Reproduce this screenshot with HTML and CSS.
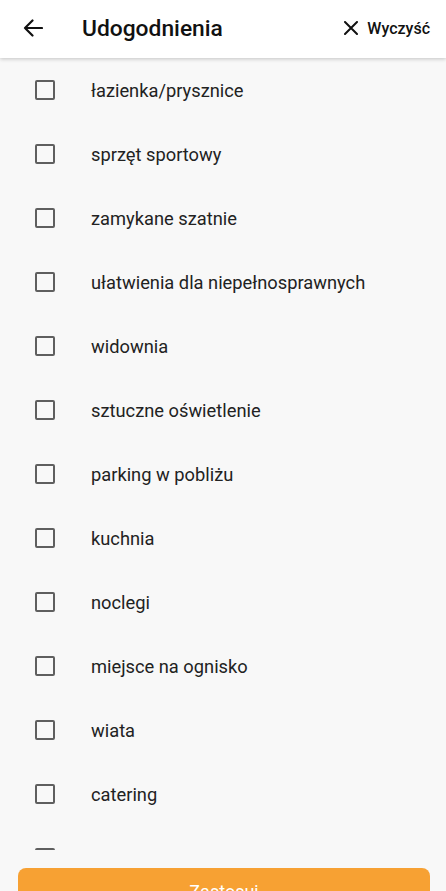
FILE: index.html
```html
<!DOCTYPE html>
<html lang="pl">
<head>
<meta charset="utf-8">
<title>Udogodnienia</title>
<link rel="stylesheet" href="styles.css">
</head>
<body>
<header class="topbar">
  <button class="back" aria-label="Wstecz">
    <svg width="20" height="18" viewBox="0 0 20 18"><path d="M19 9H2M9.5 1.5L2 9l7.5 7.5" fill="none" stroke="#111" stroke-width="2.2" stroke-linecap="round" stroke-linejoin="round"/></svg>
  </button>
  <h1 class="title">Udogodnienia</h1>
  <button class="clear">
    <svg width="14" height="14" viewBox="0 0 14 14"><path d="M1 1l12 12M13 1L1 13" stroke="#111" stroke-width="2" stroke-linecap="round"/></svg>
    <span>Wyczyść</span>
  </button>
</header>
<main class="list">
  <label class="row"><span class="box"></span><span class="text">łazienka/prysznice</span></label>
  <label class="row"><span class="box"></span><span class="text">sprzęt sportowy</span></label>
  <label class="row"><span class="box"></span><span class="text">zamykane szatnie</span></label>
  <label class="row"><span class="box"></span><span class="text">ułatwienia dla niepełnosprawnych</span></label>
  <label class="row"><span class="box"></span><span class="text">widownia</span></label>
  <label class="row"><span class="box"></span><span class="text">sztuczne oświetlenie</span></label>
  <label class="row"><span class="box"></span><span class="text">parking w pobliżu</span></label>
  <label class="row"><span class="box"></span><span class="text">kuchnia</span></label>
  <label class="row"><span class="box"></span><span class="text">noclegi</span></label>
  <label class="row"><span class="box"></span><span class="text">miejsce na ognisko</span></label>
  <label class="row"><span class="box"></span><span class="text">wiata</span></label>
  <label class="row"><span class="box"></span><span class="text">catering</span></label>
  <label class="row"><span class="box"></span></label>
</main>
<div class="footer">
  <button class="apply">Zastosuj</button>
</div>
</body>
</html>
```
FILE: styles.css
```css
* { box-sizing: border-box; }
html, body {
  margin: 0;
  padding: 0;
  height: 891px;
  overflow: hidden;
}
body {
  background: #f8f8f8;
  font-family: Roboto, "Noto Sans", sans-serif;
  color: #212121;
  position: relative;
}
.topbar {
  height: 58px;
  background: #fff;
  display: flex;
  align-items: center;
  padding: 0 16px 0 22px;
  box-shadow: 0 1px 4px rgba(0,0,0,0.22);
  position: relative;
  z-index: 2;
}
.back {
  background: none;
  border: 0;
  padding: 0;
  width: 22px;
  height: 20px;
  display: flex;
  align-items: center;
  justify-content: center;
  margin-top: -2px;
}
.title {
  margin: 0 0 0 38px;
  font-size: 22.8px;
  font-weight: 500;
  color: #111;
  flex: 1;
  margin-top: -2px;
}
.clear {
  background: none;
  border: 0;
  padding: 0;
  display: flex;
  align-items: center;
  gap: 9px;
  font-family: Roboto, sans-serif;
  font-size: 16px;
  font-weight: 500;
  color: #111;
  margin-top: -2px;
}
.list {
  display: flex;
  flex-direction: column;
}
.row {
  height: 64px;
  display: flex;
  align-items: center;
  padding-left: 35px;
}
.box {
  width: 20px;
  height: 20px;
  border: 2px solid #5f5f5f;
  border-radius: 2px;
  flex: none;
}
.text {
  margin-left: 36px;
  font-size: 18.3px;
  color: #222;
}
.footer {
  position: absolute;
  left: 0;
  right: 0;
  top: 850px;
  bottom: 0;
  padding: 18px 16px 0 18px;
  background: #f8f8f8;
  z-index: 3;
}
.apply {
  width: 100%;
  height: 48px;
  border: 0;
  border-radius: 8px;
  background: #f7a133;
  color: #fff;
  font-family: Roboto, sans-serif;
  font-size: 18px;
  line-height: 36px;
  padding: 0;
  display: block;
  text-align: center;
}
```
